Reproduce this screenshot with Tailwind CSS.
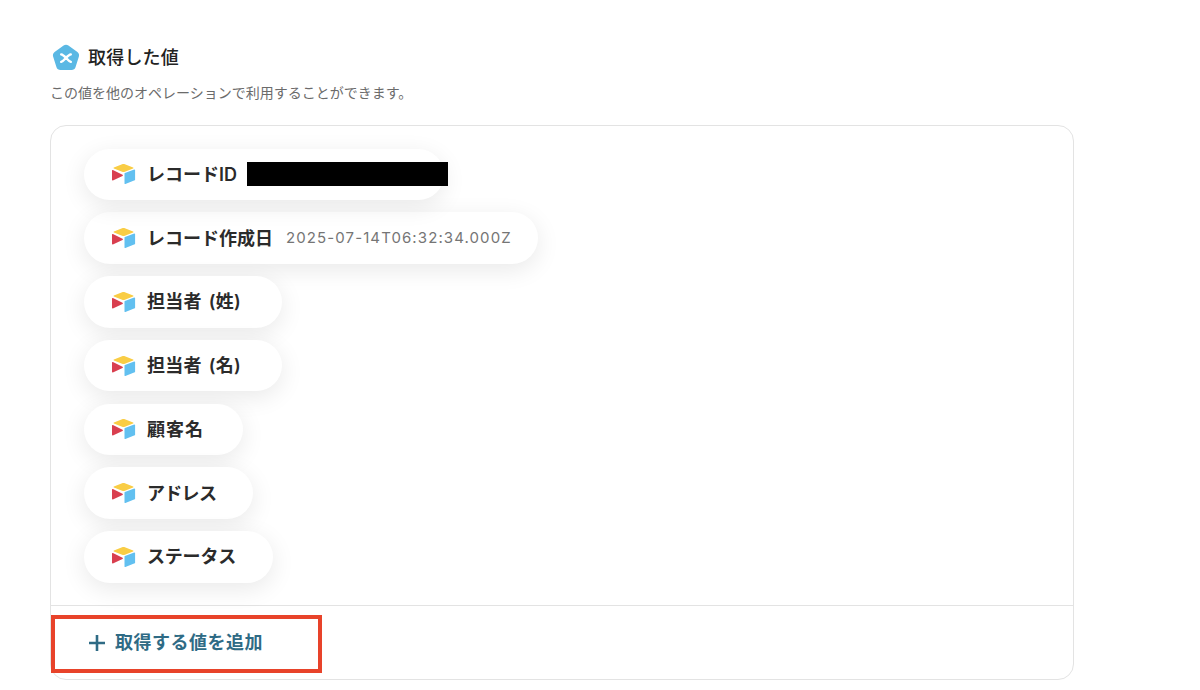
<!DOCTYPE html>
<html lang="ja">
<head>
  <meta charset="UTF-8"/>
  <title>取得した値</title>
  <script src="https://cdn.jsdelivr.net/npm/@tailwindcss/browser@4"></script>
</head>
<body class="bg-white h-[690px] overflow-hidden font-['Inter','Noto_Sans_CJK_JP',sans-serif] text-[#2b2b2b]">
  <svg class="hidden">
    <symbol id="airtable" viewBox="0 0 24 22">
      <path d="M10.6 1.2 2.4 4.4c-.5.2-.5.9 0 1.1l8.2 3.2c.9.4 1.9.4 2.8 0l8.2-3.2c.5-.2.5-.9 0-1.1l-8.2-3.2c-.9-.4-1.9-.4-2.8 0z" fill="#f9cd45"/>
      <path d="M13 10.6v9.8c0 .4.5.7.9.6l9.3-3.7c.3-.1.4-.3.4-.6V7c0-.4-.5-.7-.9-.6l-9.3 3.6c-.3.1-.4.3-.4.6z" fill="#62c0f0"/>
      <path d="M0.5 7.6v9.2c0 .5.5.8.9.6l9.6-4.4c.5-.2.5-.9 0-1.2L1.4 7c-.4-.2-.9.1-.9.6z" fill="#d93f4f"/>
    </symbol>
  </svg>

  <div class="ml-[50px] w-[1024px] pt-[44px]">
    <div class="flex items-center h-[28px] ml-[2px] gap-[8px]">
      <svg class="w-[28px] h-[28px]" viewBox="0 0 28 28">
        <path d="M11.6 1.6c1.4-1 3.4-1 4.8 0l9 6.5c1.4 1 2 2.8 1.5 4.5l-3.4 10.6c-.5 1.7-2.1 2.8-3.9 2.8H8.4c-1.8 0-3.4-1.1-3.9-2.8L1.1 12.6c-.5-1.7.1-3.5 1.5-4.5z" fill="#5ab8e4"/>
        <path d="M9.2 10.4c3.6.5 5.8 6.2 9.6 7.4M18.8 10.4c-3.6.5-5.8 6.2-9.6 7.4" fill="none" stroke="#fff" stroke-width="2.4" stroke-linecap="round"/>
      </svg>
      <h2 class="text-[18px] tracking-[0.2px] font-medium text-[#222] leading-none">取得した値</h2>
    </div>
    <p class="mt-[11px] text-[14px] leading-[20px] text-[#6b6b6b]">この値を他のオペレーションで利用することができます。</p>

    <div class="mt-[22px] h-[555px] border border-[#e3e3e3] rounded-[16px] flex flex-col overflow-hidden">
      <ul class="h-[480px] pl-[33px] pt-[22.5px] flex flex-col gap-[12.25px] border-b border-[#e3e3e3]">
        <li class="relative flex items-center self-start h-[51.5px] w-[360px] pl-[27px] rounded-full bg-white shadow-[0_6px_24px_rgba(0,0,0,0.09)]">
          <svg class="w-[25px] h-[22px] mr-[11px]"><use href="#airtable"/></svg>
          <span class="text-[18px] font-semibold">レコードID</span>
          <span class="absolute left-[163px] top-[13px] w-[201px] h-[24px] bg-black"></span>
        </li>
        <li class="flex items-center self-start h-[51.5px] w-[454px] pl-[27px] rounded-full bg-white shadow-[0_6px_24px_rgba(0,0,0,0.09)]">
          <svg class="w-[25px] h-[22px] mr-[11px]"><use href="#airtable"/></svg>
          <span class="text-[18px] font-semibold">レコード作成日</span>
          <span class="ml-[13px] text-[15px] font-normal tracking-[1.1px] text-[#757575]">2025-07-14T06:32:34.000Z</span>
        </li>
        <li class="flex items-center self-start h-[51.5px] w-[198px] pl-[27px] rounded-full bg-white shadow-[0_6px_24px_rgba(0,0,0,0.09)]">
          <svg class="w-[25px] h-[22px] mr-[11px]"><use href="#airtable"/></svg>
          <span class="text-[18px] font-semibold [word-spacing:2px] tracking-[0.3px]">担当者 (姓)</span>
        </li>
        <li class="flex items-center self-start h-[51.5px] w-[198px] pl-[27px] rounded-full bg-white shadow-[0_6px_24px_rgba(0,0,0,0.09)]">
          <svg class="w-[25px] h-[22px] mr-[11px]"><use href="#airtable"/></svg>
          <span class="text-[18px] font-semibold [word-spacing:2px] tracking-[0.3px]">担当者 (名)</span>
        </li>
        <li class="flex items-center self-start h-[51.5px] w-[159px] pl-[27px] rounded-full bg-white shadow-[0_6px_24px_rgba(0,0,0,0.09)]">
          <svg class="w-[25px] h-[22px] mr-[11px]"><use href="#airtable"/></svg>
          <span class="text-[18px] font-semibold tracking-[1px]">顧客名</span>
        </li>
        <li class="flex items-center self-start h-[51.5px] w-[169px] pl-[27px] rounded-full bg-white shadow-[0_6px_24px_rgba(0,0,0,0.09)]">
          <svg class="w-[25px] h-[22px] mr-[11px]"><use href="#airtable"/></svg>
          <span class="text-[18px] font-semibold tracking-[-0.7px]">アドレス</span>
        </li>
        <li class="flex items-center self-start h-[51.5px] w-[189px] pl-[27px] rounded-full bg-white shadow-[0_6px_24px_rgba(0,0,0,0.09)]">
          <svg class="w-[25px] h-[22px] mr-[11px]"><use href="#airtable"/></svg>
          <span class="text-[18px] font-semibold tracking-[-0.2px]">ステータス</span>
        </li>
      </ul>
      <div class="flex items-center pl-[37px] h-[73px] text-[#2f6b85]">
        <svg class="w-[18px] h-[18px] mr-[9px]" viewBox="0 0 18 18"><path d="M9 1v16M1 9h16" stroke="#2f6b85" stroke-width="2.6"/></svg>
        <span class="text-[18px] tracking-[0.5px] font-semibold">取得する値を追加</span>
      </div>
    </div>
  </div>

  <div class="absolute left-[51px] top-[615px] w-[271px] h-[58px] border-[4px] border-[#e8432a]"></div>
</body>
</html>
